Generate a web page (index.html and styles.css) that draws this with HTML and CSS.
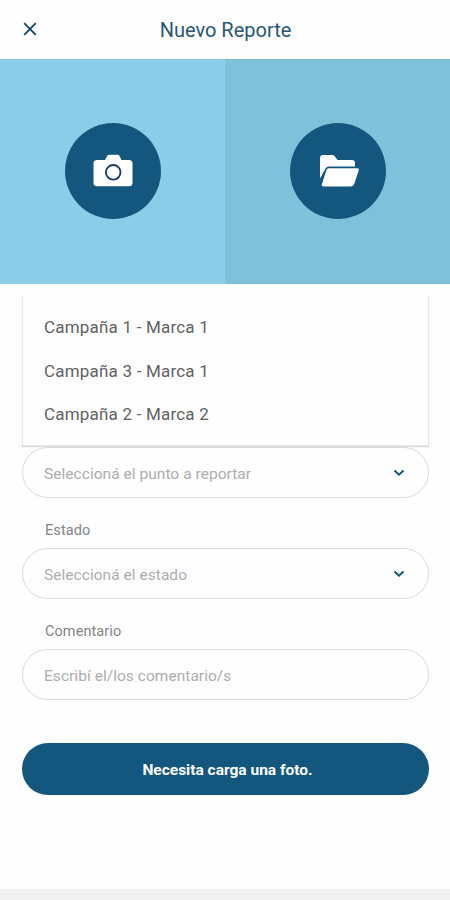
FILE: index.html
```html
<!DOCTYPE html>
<html lang="es">
<head>
<meta charset="utf-8">
<title>Nuevo Reporte</title>
<link rel="stylesheet" href="styles.css">
</head>
<body>
<div class="screen">
  <header class="header">
    <svg class="close" viewBox="0 0 14 14"><path d="M1.2 1.2 12.8 12.8M12.8 1.2 1.2 12.8"/></svg>
    <h1 class="title">Nuevo Reporte</h1>
  </header>
  <section class="sources">
    <div class="source camera">
      <div class="circle">
        <svg width="40" height="34" viewBox="0 0 40 34"><path fill="#fff" d="M4 6h8l2.200-4.200Q14.900.8 16.200.8h8.300Q25.800.8 26.400 1.800L28.500 6H36Q39.500 6 39.500 9.500V28.800Q39.500 32.300 36 32.300H4Q.5 32.300.5 28.800V9.500Q.5 6 4 6Z"/><circle cx="20.200" cy="18.300" r="7.300" fill="#fff" stroke="#143d6b" stroke-width="1.900"/></svg>
      </div>
    </div>
    <div class="source folder">
      <div class="circle">
        <svg width="40" height="34" viewBox="0 0 40 34"><path fill="#fff" d="M1 24.500V4Q1 1 4 1h9.500q1.300 0 2 1l3 4H33q3 0 3 3v3.500H10Q7.500 12.500 6.500 14.500Z"/><path fill="#fff" d="M9.500 14.200H38.200q2.200 0 1.500 2.200L35.400 29.500Q34.500 32.400 31.500 32.400H4.500Q2 32.400 2.900 30L7.500 16Q8 14.200 9.500 14.200Z"/></svg>
      </div>
    </div>
  </section>
  <main class="form">
    <ul class="options">
      <li>Campaña 1 - Marca 1</li>
      <li>Campaña 3 - Marca 1</li>
      <li>Campaña 2 - Marca 2</li>
    </ul>
    <div class="field point"><span>Seleccioná el punto a reportar</span><svg class="chevron" viewBox="0 0 12 8"><path d="M1.500 1.500 6 5.800 10.500 1.500"/></svg></div>
    <div class="label">Estado</div>
    <div class="field"><span>Seleccioná el estado</span><svg class="chevron" viewBox="0 0 12 8"><path d="M1.500 1.500 6 5.800 10.500 1.500"/></svg></div>
    <div class="label">Comentario</div>
    <div class="field"><span>Escribí el/los comentario/s</span></div>
    <button class="submit">Necesita carga una foto.</button>
  </main>
  <footer class="bottom"></footer>
</div>
</body>
</html>
```
FILE: styles.css
```css
* { box-sizing: border-box; }
body { margin: 0; background: #fefefe; font-family: Roboto, sans-serif; }
.screen { height: 900px; display: flex; flex-direction: column; overflow: hidden; }
.header { height: 59px; flex: none; display: grid; grid-template-columns: 60px 1fr 60px; align-items: center; }
.close { width: 14px; height: 14px; margin: -1px 0 0 23px; fill: none; stroke: #164565; stroke-width: 1.9; }
.title { margin: 0; padding-left: 1px; text-align: center; font-size: 20px; line-height: 24px; font-weight: 400; color: #285675; }
.sources { height: 225px; flex: none; display: grid; grid-template-columns: 1fr 1fr; }
.source { display: flex; align-items: center; justify-content: center; padding-bottom: 1px; }
.camera { background: #8bcce8; }
.folder { background: #80c1da; }
.circle { width: 96px; height: 96px; border-radius: 50%; background: #13577f; display: flex; align-items: center; justify-content: center; }
.circle svg { display: block; }
.camera .circle svg { margin-left: 1px; }
.folder .circle svg { margin-left: 3px; }
.form { flex: 1; padding: 12px 21px 0 22px; }
.options { list-style: none; margin: 0; padding: 9px 21px; height: 150px; border: solid #e9e9e9; border-width: 0 1px 1px; box-shadow: 0 1px 1px #ddd; font-size: 17px; letter-spacing: .2px; color: #626262; }
.options li { height: 43.700px; line-height: 44px; white-space: nowrap; }
.field { height: 51px; border: 1px solid #d9d9d9; border-radius: 26px; padding: 3px 23px 0 21px; display: flex; align-items: center; justify-content: space-between; font-size: 15.500px; letter-spacing: .04px; color: #adadad; white-space: nowrap; }
.point { margin-top: 1px; }
.chevron { width: 12px; height: 8px; fill: none; stroke: #195474; stroke-width: 1.900; margin-top: -2px; }
.label { height: 50px; padding: 15px 0 0 23px; font-size: 14.500px; line-height: 35px; letter-spacing: .08px; color: #858585; }
.submit { display: block; width: 100%; height: 52px; margin-top: 43px; padding: 2px 0 0 4px; border: 0; border-radius: 27px; background: #13577f; color: #fff; font-family: inherit; font-size: 15.500px; font-weight: 700; }
.bottom { height: 11px; flex: none; background: #f0f0f0; }
```
